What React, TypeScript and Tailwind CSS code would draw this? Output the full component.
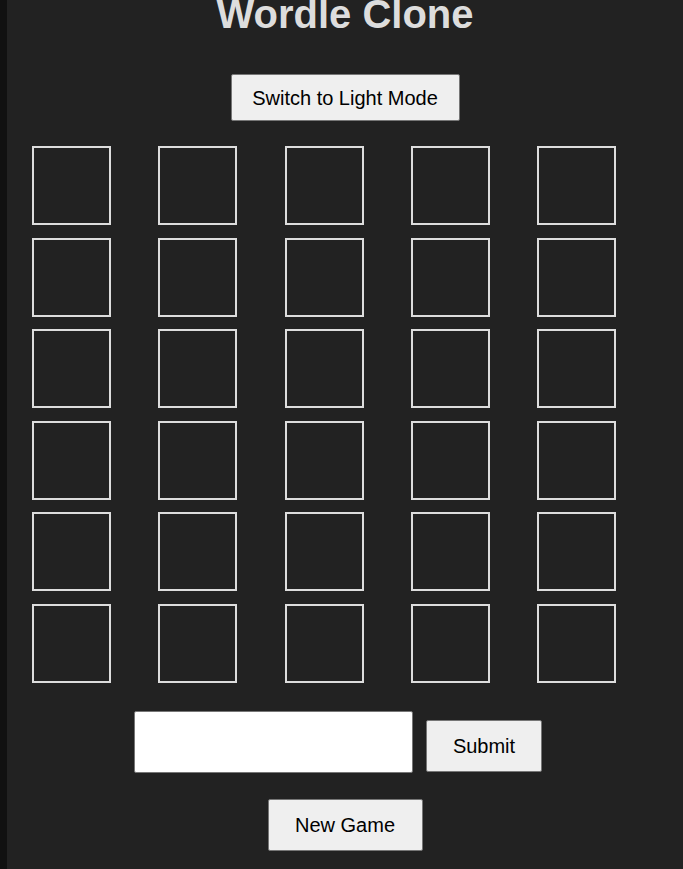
import React from "react";

export default function App() {
  const tiles = Array.from({ length: 30 }, (_, i) => i);
  return (
    <div
      className="flex min-h-[869px] h-[869px] overflow-hidden"
      style={{ fontFamily: '"Liberation Sans", Arial, sans-serif' }}
    >
      <div className="w-[7px] shrink-0 bg-[#111111]" />
      <div className="flex flex-1 flex-col items-center bg-[#222222]">
        <h1 className="mt-[-9px] text-[40px] leading-[46px] font-bold text-[#dddddd]">
          Wordle Clone
        </h1>
        <button className="mt-[37px] h-[47px] w-[229px] rounded-[2px] border border-[#767676] bg-[#efefef] text-[20px] text-black">
          Switch to Light Mode
        </button>
        <div className="mt-[25px] grid grid-cols-[repeat(5,79px)] gap-x-[47.25px] gap-y-[12.6px] self-stretch pl-[25px]">
          {tiles.map((i) => (
            <div key={i} className="h-[79px] w-[79px] border-2 border-[#dddddd]" />
          ))}
        </div>
        <div className="mt-[28px] flex items-start self-stretch pl-[127px]">
          <input
            type="text"
            className="h-[62px] w-[279px] rounded-[2px] border border-[#767676] bg-white"
          />
          <button className="ml-[13px] mt-[9px] h-[52px] w-[116px] rounded-[2px] border border-[#767676] bg-[#efefef] text-[20px] text-black">
            Submit
          </button>
        </div>
        <button className="mt-[26px] h-[52px] w-[155px] rounded-[2px] border border-[#767676] bg-[#efefef] text-[20px] text-black">
          New Game
        </button>
      </div>
    </div>
  );
}
